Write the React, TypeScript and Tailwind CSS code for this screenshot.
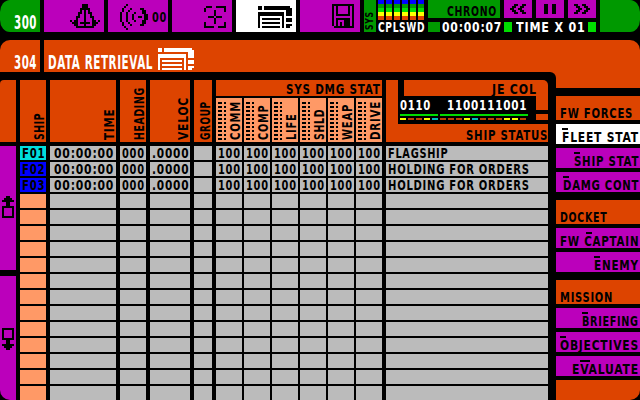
import { useLayoutEffect, useRef, useState } from 'react';
import type { ReactNode } from 'react';

type LabelProps = { text: string; w: number; h?: number; vertical?: boolean };

/* Condensed terminal lettering: w is the run length, h the capital height. */
function Label({ text, w, h = 10, vertical = false }: LabelProps) {
  const ref = useRef<HTMLSpanElement>(null);
  const [scale, setScale] = useState(0.8);
  useLayoutEffect(() => {
    if (ref.current) setScale((w + 1) / ref.current.offsetWidth);
  }, [w, text, h]);
  const turn = vertical ? `translateY(${w}px) rotate(-90deg) ` : '';
  return (
    <span
      className="block shrink-0"
      style={{ width: vertical ? h : w, height: vertical ? w : h }}
    >
      <span
        ref={ref}
        className="block w-max origin-top-left whitespace-pre font-['DejaVu_Sans',sans-serif] font-bold tracking-[1px]"
        style={{ fontSize: h / 0.729, lineHeight: `${h}px`, transform: `${turn}scaleX(${scale})` }}
      >
        {text}
      </span>
    </span>
  );
}

function Bitmap({ rows }: { rows: string[] }) {
  const cols = rows[0].length;
  return (
    <svg
      width={cols * 2}
      height={rows.length * 2}
      viewBox={`0 0 ${cols} ${rows.length}`}
      shapeRendering="crispEdges"
      fill="currentColor"
      className="block shrink-0"
    >
      {rows.flatMap((row, y) =>
        row.split('').map((c, x) => (c === '#' ? <rect key={`${x}-${y}`} x={x} y={y} width="1" height="1" /> : null)),
      )}
    </svg>
  );
}

const ANCHOR = [
  '......###......',
  '......###......',
  '.....#####.....',
  '.....#.#.#.....',
  '....##.#.##....',
  '....#..#..#....',
  '...##..#..##...',
  '...#...#...#...',
  '#.##...#...##.#',
  '.###.#####.###.',
  '..##...#...##..',
  '...#########...',
];
const SONAR = [
  '...#..........',
  '..#...........',
  '.#...#....##..',
  '.#..#......##.',
  '#..#...#...##.',
  '#..#..#.....##',
  '#..#..#..##.##',
  '#..#..#.....##',
  '#..#...#...##.',
  '.#..#......##.',
  '.#...#....##..',
  '..#...........',
  '...#..........',
];
const TARGET = [
  '.###..#####',
  '#.........#',
  '#....#....#',
  '.....#.....',
  '.....#.....',
  '..###.###..',
  '.....#.....',
  '.....#.....',
  '#....#....#',
  '#.........#',
  '#####..####',
];
const DISK = [
  '###########',
  '#.#.....#.#',
  '#.#.....#.#',
  '#.#.....#.#',
  '#.#.....#.#',
  '#.#######.#',
  '#.........#',
  '#.#######.#',
  '#.#...###.#',
  '#.#.#.###.#',
  '#.#.#.###.#',
  '.##########',
];
const REWIND = ['..##..##', '.##..##.', '##..##..', '.##..##.', '..##..##'];
const FORWARD = ['##..##..', '.##..##.', '..##..##', '.##..##.', '##..##..'];
const PAUSE = ['##..##', '##..##', '##..##', '##..##', '##..##'];
const ARROW_UP = ['..##..', '.####.', '######', '..##..', '..##..', '######', '#....#', '#....#', '#....#', '#....#', '######'];
const ARROW_DOWN = [...ARROW_UP].reverse();

function ListIcon({ width }: { width: number }) {
  const r = width - 34;
  return (
    <svg width={width} height="22" shapeRendering="crispEdges" fill="currentColor" className="block shrink-0">
      <path
        d={`M0 0h4v4h-4z M6 0h${26 + r}v2h2v8h-6v-6h-${22 + r}z M0 6h${26 + r}v16h-2v-12h-${22 + r}v12h-2z M4 12h${18 + r}v2h-${18 + r}z M4 16h${18 + r}v2h-${18 + r}z M4 20h${18 + r}v2h-${18 + r}z M${28 + r} 12h6v4h-6z M${28 + r} 18h6v2h-2v2h-4z`}
      />
    </svg>
  );
}

function TopBar() {
  return (
    <header className="flex h-8 gap-1">
      <div className="flex w-10 items-end justify-end rounded-l-[10px_12px] bg-[#009900] pr-1 pb-0.5 text-white">
        <Label text="300" w={22} h={14} />
      </div>
      <div className="flex w-15 justify-end bg-[#bb00bb] pt-1 pr-1">
        <Bitmap rows={ANCHOR} />
      </div>
      <div className="flex w-15 gap-1 bg-[#bb00bb] pt-1 pl-3">
        <Bitmap rows={SONAR} />
        <div className="pt-2">
          <Label text="00" w={14} />
        </div>
      </div>
      <div className="flex w-15 justify-end bg-[#bb00bb] pt-1.5 pr-1.5">
        <Bitmap rows={TARGET} />
      </div>
      <div className="flex w-15 justify-end bg-white pt-1.5 pr-1">
        <ListIcon width={34} />
      </div>
      <div className="flex w-15 justify-end bg-[#bb00bb] pt-1 pr-1.5">
        <Bitmap rows={DISK} />
      </div>
      <div className="flex">
        <div className="flex w-3 items-end justify-center bg-[#009900] pb-0.5">
          <Label text="SYS" w={18} h={8} vertical />
        </div>
        <div className="ml-0.5 flex w-[46px] flex-col gap-0.5 text-white">
          <div className="flex gap-0.5">
            {'CPLSWD'.split('').map((k) => (
              <div key={k} className="w-1.5">
                <div className="h-1 bg-[#0000ff]" />
                <div className="h-1 bg-[#009900]" />
                <div className="h-1 bg-[#00dd00]" />
                <div className="h-1 bg-[#ffff00]" />
                <div className="h-1 bg-[#dd4400]" />
              </div>
            ))}
          </div>
          <Label text="CPLSWD" w={46} />
        </div>
      </div>
      <div className="flex w-[168px] flex-col gap-1">
        <div className="flex h-[18px] gap-1">
          <div className="flex w-18 items-end justify-end bg-[#009900] pr-1 pb-0.5">
            <Label text="CHRONO" w={49} />
          </div>
          {[REWIND, PAUSE, FORWARD].map((icon, i) => (
            <div key={i} className="flex w-7 justify-center bg-[#bb00bb] pt-1">
              <Bitmap rows={icon} />
            </div>
          ))}
        </div>
        <div className="flex h-2.5 text-white">
          <div className="mr-0.5 w-3 bg-[#009900]" />
          <Label text="00:00:07" w={59} />
          <div className="mr-1 ml-[3px] w-2 bg-[#00dd00]" />
          <Label text="TIME X 01" w={69} />
          <div className="ml-[3px] w-2 bg-[#00dd00]" />
        </div>
      </div>
      <div className="w-10 rounded-r-[10px_12px] bg-[#009900]" />
    </header>
  );
}

function TitleBar() {
  return (
    <div className="flex h-8 gap-1 text-white">
      <div className="flex w-10 items-end justify-end rounded-tl-[10px] bg-[#dd4400] pr-1 pb-0.5">
        <Label text="304" w={22} h={14} />
      </div>
      <div className="flex flex-1 items-end gap-1.5 rounded-tr-[10px] bg-[#dd4400] pb-0.5 pl-1">
        <Label text="DATA RETRIEVAL" w={104} h={14} />
        <ListIcon width={36} />
      </div>
    </div>
  );
}

function Scroller() {
  return (
    <div className="flex w-4 flex-col">
      <div className="h-[62px] rounded-tl-[4px] bg-[#dd4400]" />
      <div className="mt-1 flex h-[124px] justify-center bg-[#bb00bb] pt-[50px]">
        <Bitmap rows={ARROW_UP} />
      </div>
      <div className="mt-1.5 flex h-[124px] justify-center rounded-bl-[10px] bg-[#bb00bb] pt-[52px]">
        <Bitmap rows={ARROW_DOWN} />
      </div>
    </div>
  );
}

function Cells({ values, w, pad }: { values: string[]; w: number; pad: string }) {
  return (
    <>
      {Array.from({ length: 16 }, (_, i) => (
        <div key={i} className={`h-3.5 bg-[#bbbbbb] pt-0.5 ${pad}`}>
          {values[i] ? <Label text={values[i]} w={w} /> : null}
        </div>
      ))}
    </>
  );
}

type ColumnProps = { title: string; len: number; width: string; children: ReactNode };

function Column({ title, len, width, children }: ColumnProps) {
  return (
    <div className={`flex shrink-0 flex-col gap-0.5 ${width}`}>
      <div className="mb-0.5 flex h-[62px] items-end justify-end bg-[#dd4400] pr-0.5 pb-0.5">
        <Label text={title} w={len} vertical />
      </div>
      {children}
    </div>
  );
}

const SHIP_COLORS = ['bg-[#00dddd]', 'bg-[#0000ff]', 'bg-[#0000ff]'];
const SHIPS = ['F01', 'F02', 'F03'];
const SYSTEMS: [string, number][] = [
  ['COMM', 38],
  ['COMP', 34],
  ['LIFE', 26],
  ['SHLD', 30],
  ['WEAP', 35],
  ['DRIVE', 38],
];

function DamageColumns() {
  return (
    <div className="flex w-[166px] shrink-0 flex-col gap-0.5">
      <div className="flex h-4 justify-end bg-[#dd4400] pt-1 pr-0.5">
        <Label text="SYS DMG STAT" w={94} />
      </div>
      <div className="flex gap-0.5">
        {SYSTEMS.map(([name, len]) => (
          <div key={name} className="flex w-[26px] flex-col gap-0.5">
            <div className="mb-0.5 flex h-11 items-end justify-end bg-[#ff9966] pr-0.5 pb-0.5">
              <div className="mr-1 flex flex-col gap-0.5">
                {Array.from({ length: 10 }, (_, i) => (
                  <div key={i} className="flex gap-0.5">
                    <div className="h-0.5 w-1 bg-black" />
                    <div className="h-0.5 w-0.5 bg-black" />
                  </div>
                ))}
              </div>
              <Label text={name} w={len} vertical />
            </div>
            <Cells values={['100', '100', '100']} w={22} pad="pl-0.5" />
          </div>
        ))}
      </div>
    </div>
  );
}

const DASHES = [
  'bg-[#ffff00]', 'bg-[#bb4400]', 'bg-[#bb4400]', 'bg-[#ffff00]', 'bg-[#00bbbb]', 'bg-[#bb4400]', 'bg-[#bb4400]', 'bg-[#bb4400]',
  'bg-[#ffff00]', 'bg-[#00bbbb]', 'bg-[#bb4400]', 'bg-[#bb4400]', 'bg-[#bb4400]', 'bg-[#ffff00]', 'bg-[#ffff00]', 'bg-[#bb4400]',
];

function StatusColumn() {
  return (
    <div className="flex w-[162px] shrink-0 flex-col gap-0.5">
      <div className="mb-0.5 flex h-[62px] flex-col rounded-tr-[5px] bg-[#dd4400]">
        <div className="flex h-4 justify-between pt-0 pr-3 pl-3">
          <div className="w-1.5 bg-black" />
          <div className="pt-1">
            <Label text="JE COL" w={44} />
          </div>
        </div>
        <div className="flex h-7 pl-3">
          <div className="w-[138px] bg-black pt-1 pl-0.5 text-white">
            <div className="flex justify-between pr-2.5">
              <Label text="0110" w={30} />
              <Label text="1100111001" w={79} />
            </div>
            <div className="mt-1 flex h-0.5 gap-0.5">
              <div className="w-[38px] bg-[#00dd00]" />
              <div className="w-[88px] bg-[#00dd00]" />
            </div>
            <div className="mt-0.5 flex gap-0.5">
              {DASHES.map((c, i) => (
                <div key={i} className={`h-0.5 w-1.5 ${c}`} />
              ))}
            </div>
          </div>
          <div className="flex flex-1 flex-col justify-between pt-3.5">
            <div className="h-1 bg-black" />
            <div className="h-1 bg-black" />
          </div>
        </div>
        <div className="flex justify-end pt-1.5 pr-px">
          <Label text="SHIP STATUS" w={81} />
        </div>
      </div>
      {Array.from({ length: 16 }, (_, i) => (
        <div key={i} className="h-3.5 bg-[#bbbbbb] pt-0.5 pl-0.5">
          {i === 0 && <Label text="FLAGSHIP" w={59} />}
          {(i === 1 || i === 2) && <Label text="HOLDING FOR ORDERS" w={141} />}
        </div>
      ))}
    </div>
  );
}

function FleetTable() {
  return (
    <div className="flex flex-1 gap-1">
      <Column title="SHIP" len={26} width="w-[26px]">
        {Array.from({ length: 16 }, (_, i) => (
          <div key={i} className={`h-3.5 pt-0.5 pl-0.5 ${SHIP_COLORS[i] ?? 'bg-[#ff9966]'}`}>
            {SHIPS[i] ? <Label text={SHIPS[i]} w={22} /> : null}
          </div>
        ))}
      </Column>
      <Column title="TIME" len={30} width="w-[66px]">
        <Cells values={['00:00:00', '00:00:00', '00:00:00']} w={59} pad="pl-1" />
      </Column>
      <Column title="HEADING" len={52} width="w-[26px]">
        <Cells values={['000', '000', '000']} w={22} pad="pl-0.5" />
      </Column>
      <Column title="VELOC" len={42} width="w-10">
        <Cells values={['.0000', '.0000', '.0000']} w={36} pad="pl-0.5" />
      </Column>
      <Column title="GROUP" len={38} width="w-[18px]">
        <Cells values={[]} w={0} pad="" />
      </Column>
      <DamageColumns />
      <StatusColumn />
    </div>
  );
}

function Heading({ text, w }: { text: string; w: number }) {
  return (
    <div className="flex h-6 items-end bg-[#dd4400] pb-0.5 pl-1">
      <Label text={text} w={w} />
    </div>
  );
}

type ItemProps = { text: string; w: number; color?: string; mark?: string };

/* A menu entry with a bar above its shortcut letter. */
function Item({ text, w, color = 'bg-[#bb00bb]', mark = 'left-0 w-1.5' }: ItemProps) {
  return (
    <div className={`flex h-5 items-end justify-end pr-0.5 pb-0.5 ${color}`}>
      <div className="relative">
        <span className={`absolute -top-1 h-0.5 bg-black ${mark}`} />
        <Label text={text} w={w} />
      </div>
    </div>
  );
}

function Menu() {
  return (
    <nav className="flex w-[84px] shrink-0 flex-col gap-1">
      <div className="mb-1 h-2 bg-[#dd4400]" />
      <Heading text="FW FORCES" w={72} />
      <Item text="FLEET STAT" w={76} color="bg-white" />
      <Item text="SHIP STAT" w={64} />
      <Item text="DAMG CONT" w={75} />
      <div className="h-0" />
      <Heading text="DOCKET" w={46} />
      <Item text="FW CAPTAIN" w={78} mark="left-[26px] w-1.5" />
      <Item text="ENEMY" w={44} />
      <div className="h-0" />
      <Heading text="MISSION" w={52} />
      <Item text="BRIEFING" w={56} />
      <Item text="OBJECTIVES" w={78} />
      <Item text="EVALUATE" w={66} mark="left-2 w-2.5" />
      <div className="h-5 rounded-br-[10px] bg-[#dd4400]" />
    </nav>
  );
}

export default function App() {
  return (
    <div className="flex h-[400px] w-[640px] flex-col overflow-hidden bg-black text-black">
      <TopBar />
      <div className="h-2" />
      <TitleBar />
      <div className="flex h-2 justify-end">
        <div className="flex w-[92px]">
          <div className="flex-1 bg-[#dd4400]">
            <div className="h-full rounded-tr-[6px] bg-black" />
          </div>
          <div className="w-[84px] bg-[#dd4400]" />
        </div>
      </div>
      <div className="flex h-80 gap-1">
        <Scroller />
        <FleetTable />
        <div className="-ml-1 w-1 shrink-0" />
        <Menu />
      </div>
    </div>
  );
}
